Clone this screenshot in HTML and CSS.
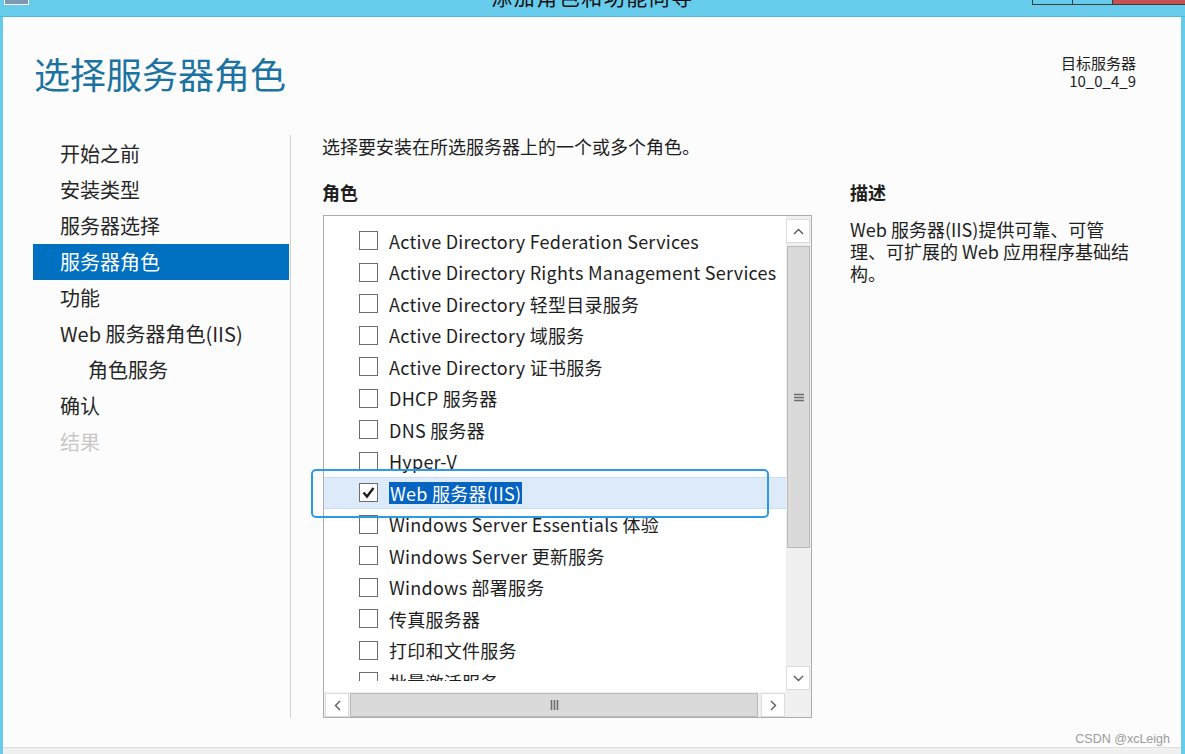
FILE: index.html
```html
<!DOCTYPE html>
<html lang="zh-CN">
<head>
<meta charset="utf-8">
<title>添加角色和功能向导</title>
<link rel="stylesheet" href="styles.css">
</head>
<body>
<div class="window">
  <div class="titlebar">
    <div class="app-icon"></div>
    <div class="title">添加角色和功能向导</div>
    <div class="controls">
      <span class="ctl"></span><span class="ctl"></span><span class="ctl ctl-close"></span>
    </div>
  </div>
  <div class="frame">
    <header class="head">
      <h1 class="page-title">选择服务器角色</h1>
      <div class="target">
        <div>目标服务器</div>
        <div>10_0_4_9</div>
      </div>
    </header>
    <div class="main">
      <nav class="nav">
        <div class="nav-item">开始之前</div>
        <div class="nav-item">安装类型</div>
        <div class="nav-item">服务器选择</div>
        <div class="nav-item active">服务器角色</div>
        <div class="nav-item">功能</div>
        <div class="nav-item">Web 服务器角色(IIS)</div>
        <div class="nav-item sub">角色服务</div>
        <div class="nav-item">确认</div>
        <div class="nav-item disabled">结果</div>
      </nav>
      <section class="content">
        <p class="intro">选择要安装在所选服务器上的一个或多个角色。</p>
        <div class="cols">
          <div class="roles">
            <h2 class="col-head">角色</h2>
            <div class="listbox">
              <div class="list-main">
                <div class="items-wrap">
                  <ul class="items">
                    <li class="item"><span class="cb"></span><span class="label">Active Directory Federation Services</span></li>
                    <li class="item"><span class="cb"></span><span class="label">Active Directory Rights Management Services</span></li>
                    <li class="item"><span class="cb"></span><span class="label">Active Directory 轻型目录服务</span></li>
                    <li class="item"><span class="cb"></span><span class="label">Active Directory 域服务</span></li>
                    <li class="item"><span class="cb"></span><span class="label">Active Directory 证书服务</span></li>
                    <li class="item"><span class="cb"></span><span class="label">DHCP 服务器</span></li>
                    <li class="item"><span class="cb"></span><span class="label">DNS 服务器</span></li>
                    <li class="item"><span class="cb"></span><span class="label">Hyper-V</span></li>
                    <li class="item selected"><span class="cb"><svg class="check" width="17" height="17" viewBox="0 0 17 17"><path d="M3.5 8.5 L7 12.5 L13.5 4" fill="none" stroke="#1e1e1e" stroke-width="2.4"/></svg></span><span class="label sel">Web 服务器(IIS)</span></li>
                    <li class="item"><span class="cb"></span><span class="label">Windows Server Essentials 体验</span></li>
                    <li class="item"><span class="cb"></span><span class="label">Windows Server 更新服务</span></li>
                    <li class="item"><span class="cb"></span><span class="label">Windows 部署服务</span></li>
                    <li class="item"><span class="cb"></span><span class="label">传真服务器</span></li>
                    <li class="item"><span class="cb"></span><span class="label">打印和文件服务</span></li>
                    <li class="item"><span class="cb"></span><span class="label">批量激活服务</span></li>
                  </ul>
                </div>
                <div class="vscroll">
                  <div class="sbtn"><svg width="11" height="7" viewBox="0 0 11 7"><polyline points="1,6 5.5,1.5 10,6" fill="none" stroke="#5a5a5a" stroke-width="1.4"/></svg></div>
                  <div class="vthumb"><svg width="10" height="9" viewBox="0 0 10 9"><path d="M0 1.5H10M0 4.5H10M0 7.5H10" stroke="#6e6e6e" stroke-width="1.6"/></svg></div>
                  <div class="vtrack"></div>
                  <div class="sbtn"><svg width="11" height="7" viewBox="0 0 11 7"><polyline points="1,1 5.5,5.5 10,1" fill="none" stroke="#5a5a5a" stroke-width="1.4"/></svg></div>
                </div>
              </div>
              <div class="hscroll">
                <div class="sbtn"><svg width="7" height="11" viewBox="0 0 7 11"><polyline points="6,1 1.5,5.5 6,10" fill="none" stroke="#5a5a5a" stroke-width="1.4"/></svg></div>
                <div class="hthumb"><svg width="9" height="10" viewBox="0 0 9 10"><path d="M1.5 0V10M4.5 0V10M7.5 0V10" stroke="#6e6e6e" stroke-width="1.6"/></svg></div>
                <div class="sbtn btn-right"><svg width="7" height="11" viewBox="0 0 7 11"><polyline points="1,1 5.5,5.5 1,10" fill="none" stroke="#5a5a5a" stroke-width="1.4"/></svg></div>
                <div class="corner"></div>
              </div>
              <div class="focus-ring"></div>
            </div>
          </div>
          <div class="desc">
            <h2 class="col-head">描述</h2>
            <p class="desc-text">Web 服务器(IIS)提供可靠、可管理、可扩展的 Web 应用程序基础结构。</p>
          </div>
        </div>
      </section>
    </div>
    <div class="footer"></div>
    <div class="watermark">CSDN @xcLeigh</div>
  </div>
</div>
</body>
</html>
```
FILE: styles.css
```css
* { box-sizing: border-box; }
html, body { margin: 0; padding: 0; }
body {
  width: 1185px;
  height: 754px;
  overflow: hidden;
  background: #67cbec;
  font-family: "Noto Sans CJK SC", "Noto Sans", sans-serif;
  color: #1e1e1e;
}
.window { height: 754px; display: flex; flex-direction: column; }

.titlebar {
  height: 17px;
  flex: none;
  display: grid;
  grid-template-columns: 1fr auto 1fr;
  align-items: start;
  border-bottom: 1px solid #58b6d8;
  overflow: hidden;
  background: #67cbec;
}
.app-icon {
  justify-self: start;
  margin-left: 4px;
  width: 25px;
  height: 5px;
  background: #7d9ab5;
  border: 1px solid #ffffff;
  border-top: none;
}
.title {
  font-size: 21px;
  line-height: 21px;
  margin-top: -14px;
  color: #111;
  letter-spacing: 1.5px;
  white-space: nowrap;
}
.controls { justify-self: end; display: flex; }
.ctl {
  width: 41px;
  height: 5px;
  border: 1px solid #3d3d3d;
  border-top: none;
  margin-left: -1px;
  background: #67cbec;
}
.ctl-close { width: 73px; background: #c75050; border-right: none; }

.frame {
  flex: 1;
  position: relative;
  display: flex;
  flex-direction: column;
  background: #fcfcfc;
  border-left: 3px solid #67cbec;
  border-right: 4px solid #67cbec;
}
.head {
  display: flex;
  justify-content: space-between;
  align-items: flex-start;
  padding: 38px 45px 0 31px;
}
.page-title {
  margin: 0;
  font-size: 36px;
  line-height: 36px;
  font-weight: normal;
  color: #1a73a0;
}
.target {
  margin-top: -1px;
  font-size: 15px;
  line-height: 18px;
  text-align: right;
  color: #1e1e1e;
}

.main { display: flex; margin-top: 44px; padding-left: 30px; }
.nav { width: 256px; margin-right: 1px; padding-top: 1px; flex: none; }
.nav-item {
  height: 36px;
  line-height: 36px;
  padding-left: 27px;
  font-size: 20px;
  color: #262626;
  white-space: nowrap;
}
.nav-item.active { background: #0070c0; color: #ffffff; }
.nav-item.sub { padding-left: 55px; }
.nav-item.disabled { color: #c8c8c8; }

.content { border-left: 1px solid #d3d3d3; padding-left: 31px; }
.intro { margin: 0; font-size: 18px; line-height: 22px; }
.cols { display: flex; gap: 38px; margin-top: 24px; }
.col-head { margin: 0; font-size: 18px; line-height: 22px; font-weight: bold; color: #1e1e1e; }

.listbox {
  margin-top: 12px;
  margin-left: 1px;
  width: 489px;
  height: 503px;
  border: 1px solid #adadad;
  background: #ffffff;
  position: relative;
  display: flex;
  flex-direction: column;
}
.list-main { flex: 1; display: flex; min-height: 0; }
.items-wrap { flex: 1; padding-top: 9px; min-width: 0; }
.items { list-style: none; margin: 0; padding: 0; height: 456px; overflow: hidden; }
.item {
  height: 31.5px;
  display: flex;
  align-items: center;
  padding-left: 35px;
  font-size: 18px;
  letter-spacing: 0.25px;
  white-space: nowrap;
}
.item.selected {
  background: #dceafa;
  box-shadow: inset 0 1px #c6ddf6, inset 0 -1px #c6ddf6;
}
.cb {
  width: 19px;
  height: 19px;
  border: 1px solid #6d6d6d;
  background: #ffffff;
  margin-right: 11px;
  flex: none;
  display: flex;
  align-items: center;
  justify-content: center;
}
.label { line-height: 22px; }
.label.sel { background: #0563c1; color: #ffffff; padding: 0 1px; }

.vscroll {
  width: 25px;
  flex: none;
  display: flex;
  flex-direction: column;
  padding: 3px 0 2px;
  background: #f0f0f0;
}
.sbtn {
  width: 24px;
  height: 24px;
  flex: none;
  background: #ffffff;
  border: 1px solid #dcdcdc;
  display: flex;
  align-items: center;
  justify-content: center;
}
.vthumb {
  margin: 3px 0 0 1px;
  width: 23px;
  height: 302px;
  flex: none;
  background: #dadada;
  border: 1px solid #b9b9b9;
  display: flex;
  align-items: center;
  justify-content: center;
}
.vtrack { flex: 1; }

.hscroll {
  height: 25px;
  flex: none;
  display: flex;
  padding: 1px 0 0 1px;
  background: #f0f0f0;
}
.hthumb {
  flex: 1;
  margin: 0 3px 0 1px;
  background: #dadada;
  border: 1px solid #b9b9b9;
  display: flex;
  align-items: center;
  justify-content: center;
}
.btn-right { margin-right: 1px; }
.corner { width: 25px; flex: none; background: #f0f0f0; }

.focus-ring {
  position: absolute;
  left: -13px;
  top: 253px;
  width: 458px;
  height: 49px;
  border: 2px solid #2c9be6;
  border-radius: 5px;
  pointer-events: none;
}

.desc { width: 288px; }
.desc-text { margin: 15px 0 0; font-size: 18px; line-height: 22px; color: #1e1e1e; }

.footer {
  margin-top: auto;
  height: 7px;
  background: #f0f0f0;
  border-top: 1px solid #e1e1e1;
}
.watermark {
  position: absolute;
  right: 11px;
  bottom: 8px;
  font-family: "Liberation Sans", sans-serif;
  font-size: 12.5px;
  line-height: 14px;
  color: #9b9b9b;
}
```
